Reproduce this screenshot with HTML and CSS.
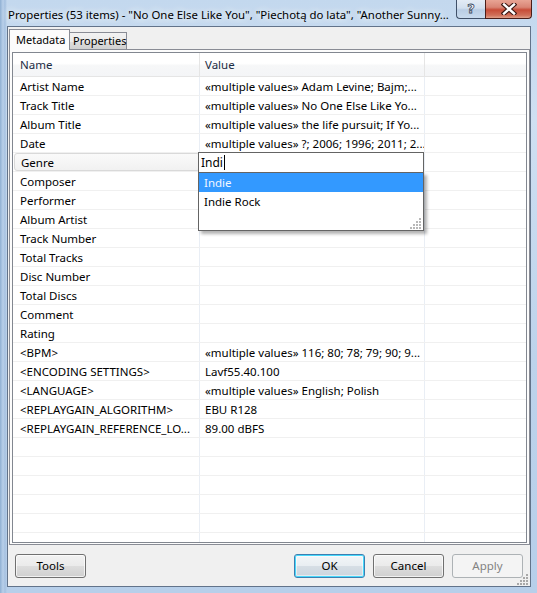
FILE: index.html
```html
<!DOCTYPE html>
<html>
<head>
<meta charset="utf-8">
<link rel="stylesheet" href="styles.css">
</head>
<body>
<div class="titlebar">
  <div class="title">Properties (53 items) - "No One Else Like You", "Piechotą do lata", "Another Sunny...</div>
  <div class="caption">
    <div class="cb help"><span>?</span></div>
    <div class="cb close">
      <svg width="16" height="12" viewBox="0 0 16 12"><path d="M3 1.5 L13 10.5 M13 1.5 L3 10.5" stroke="#3b1712" stroke-width="4.6" stroke-linecap="square" fill="none"/><path d="M3 1.5 L13 10.5 M13 1.5 L3 10.5" stroke="#ffffff" stroke-width="2.4" stroke-linecap="square" fill="none"/></svg>
    </div>
  </div>
</div>
<div class="client">
  <div class="tabs">
    <div class="tab active">Metadata</div>
    <div class="tab">Properties</div>
  </div>
  <div class="panel">
    <div class="list">
      <div class="row header"><div class="c1">Name</div><div class="c2">Value</div><div class="c3"></div></div>
      <div class="row"><div class="c1">Artist Name</div><div class="c2">«multiple values» Adam Levine; Bajm;...</div><div class="c3"></div></div>
      <div class="row"><div class="c1">Track Title</div><div class="c2">«multiple values» No One Else Like Yo...</div><div class="c3"></div></div>
      <div class="row"><div class="c1">Album Title</div><div class="c2">«multiple values» the life pursuit; If Yo...</div><div class="c3"></div></div>
      <div class="row"><div class="c1">Date</div><div class="c2">«multiple values» ?; 2006; 1996; 2011; 2...</div><div class="c3"></div></div>
      <div class="row sel"><div class="c1">Genre</div><div class="c2"></div><div class="c3"></div></div>
      <div class="row"><div class="c1">Composer</div><div class="c2"></div><div class="c3"></div></div>
      <div class="row"><div class="c1">Performer</div><div class="c2"></div><div class="c3"></div></div>
      <div class="row"><div class="c1">Album Artist</div><div class="c2"></div><div class="c3"></div></div>
      <div class="row"><div class="c1">Track Number</div><div class="c2"></div><div class="c3"></div></div>
      <div class="row"><div class="c1">Total Tracks</div><div class="c2"></div><div class="c3"></div></div>
      <div class="row"><div class="c1">Disc Number</div><div class="c2"></div><div class="c3"></div></div>
      <div class="row"><div class="c1">Total Discs</div><div class="c2"></div><div class="c3"></div></div>
      <div class="row"><div class="c1">Comment</div><div class="c2"></div><div class="c3"></div></div>
      <div class="row"><div class="c1">Rating</div><div class="c2"></div><div class="c3"></div></div>
      <div class="row"><div class="c1">&lt;BPM&gt;</div><div class="c2">«multiple values» 116; 80; 78; 79; 90; 9...</div><div class="c3"></div></div>
      <div class="row"><div class="c1">&lt;ENCODING SETTINGS&gt;</div><div class="c2">Lavf55.40.100</div><div class="c3"></div></div>
      <div class="row"><div class="c1">&lt;LANGUAGE&gt;</div><div class="c2">«multiple values» English; Polish</div><div class="c3"></div></div>
      <div class="row"><div class="c1">&lt;REPLAYGAIN_ALGORITHM&gt;</div><div class="c2">EBU R128</div><div class="c3"></div></div>
      <div class="row"><div class="c1">&lt;REPLAYGAIN_REFERENCE_LO...</div><div class="c2">89.00 dBFS</div><div class="c3"></div></div>
      <div class="row"><div class="c1"></div><div class="c2"></div><div class="c3"></div></div>
      <div class="row"><div class="c1"></div><div class="c2"></div><div class="c3"></div></div>
      <div class="row"><div class="c1"></div><div class="c2"></div><div class="c3"></div></div>
      <div class="row"><div class="c1"></div><div class="c2"></div><div class="c3"></div></div>
      <div class="row"><div class="c1"></div><div class="c2"></div><div class="c3"></div></div>
      <div class="row"><div class="c1"></div><div class="c2"></div><div class="c3"></div></div>

      <div class="edit"><span>Indi</span><span class="caret"></span></div>
      <div class="dropdown">
        <div class="opt hl">Indie</div>
        <div class="opt">Indie Rock</div>
        <svg class="grip" width="12" height="12" viewBox="0 0 12 12"><g fill="#b8b8b8"><rect x="9" y="1" width="2" height="2"/><rect x="6" y="4" width="2" height="2"/><rect x="9" y="4" width="2" height="2"/><rect x="3" y="7" width="2" height="2"/><rect x="6" y="7" width="2" height="2"/><rect x="9" y="7" width="2" height="2"/><rect x="0" y="10" width="2" height="2"/><rect x="3" y="10" width="2" height="2"/><rect x="6" y="10" width="2" height="2"/><rect x="9" y="10" width="2" height="2"/></g></svg>
      </div>
    </div>
  </div>
  <div class="buttons">
    <div class="btn">Tools</div>
    <div class="spacer"></div>
    <div class="btn default">OK</div>
    <div class="btn">Cancel</div>
    <div class="btn disabled">Apply</div>
  </div>
  <svg class="sizegrip" width="12" height="12" viewBox="0 0 12 12"><g fill="#a8a8a8"><rect x="9" y="1" width="2" height="2"/><rect x="6" y="4" width="2" height="2"/><rect x="9" y="4" width="2" height="2"/><rect x="3" y="7" width="2" height="2"/><rect x="6" y="7" width="2" height="2"/><rect x="9" y="7" width="2" height="2"/><rect x="0" y="10" width="2" height="2"/><rect x="3" y="10" width="2" height="2"/><rect x="6" y="10" width="2" height="2"/><rect x="9" y="10" width="2" height="2"/></g></svg>
</div>
</body>
</html>
```
FILE: styles.css
```css
* { box-sizing: border-box; }
html, body { margin: 0; padding: 0; }
body {
  width: 537px;
  height: 593px;
  overflow: hidden;
  font-family: "Noto Sans", "Open Sans", sans-serif;
  font-size: 11.5px;
  color: #000;
  background:
    linear-gradient(90deg, #8fb0d3 0px, #b9d0ea 3px, #a6c1e0 5px, rgba(0,0,0,0) 7px),
    linear-gradient(180deg, #c3d8ee 0%, #cfe0f2 20%, #bdd3eb 60%, #b7cfea 100%);
  display: flex;
  flex-direction: column;
}

.titlebar {
  height: 26px;
  position: relative;
  flex: none;
}
.title {
  padding: 7px 0 0 8px;
  font-size: 11.4px;
  line-height: 16px;
  white-space: nowrap;
  width: 450px;
  overflow: hidden;
  text-shadow: 0 0 6px #eef5fc, 0 0 10px #eef5fc;
}
.caption {
  position: absolute;
  top: 0;
  right: 5px;
  display: flex;
}
.cb {
  height: 19px;
  display: flex;
  align-items: center;
  justify-content: center;
  border: 1px solid #3f5068;
  border-top: none;
}
.help {
  width: 29px;
  border-right: none;
  border-radius: 0 0 0 4px;
  background: linear-gradient(180deg, #e3ebf5 0%, #d2dfee 45%, #b9cde4 55%, #c9dbee 100%);
}
.help span {
  font-family: "DejaVu Sans", sans-serif;
  font-weight: bold;
  font-size: 13px;
  color: #fff;
  -webkit-text-stroke: 0.8px #36465c;
  line-height: 1;
  margin-top: -2px;
}
.close {
  width: 47px;
  border-color: #4a1d18;
  border-radius: 0 0 4px 0;
  background: linear-gradient(180deg, #e8a494 0%, #d98575 40%, #c74c38 55%, #d0705a 85%, #e0a08a 100%);
}

.client {
  margin-left: 7px;
  width: 524px;
  height: 561px;
  border: 1px solid #62738a;
  background: #f0f0f0;
  display: flex;
  flex-direction: column;
  position: relative;
  flex: none;
}

.tabs {
  display: flex;
  align-items: flex-start;
  height: 22px;
  padding: 2px 0 0 1px;
  flex: none;
}
.tab {
  height: 18px;
  margin-top: 3px;
  width: 57px;
  border: 1px solid #898c95;
  border-bottom: none;
  border-left: none;
  background: linear-gradient(180deg, #f2f2f2 0%, #ebebeb 50%, #dddddd 51%, #cfcfcf 100%);
  padding-left: 3px;
  line-height: 16px;
  font-size: 11px;
  white-space: nowrap;
}
.tab.active {
  height: 21px;
  margin-top: 0;
  width: 61px;
  border-left: 1px solid #898c95;
  background: #fcfcfc;
  padding-left: 6px;
  line-height: 19px;
  position: relative;
  z-index: 2;
}

.panel {
  margin-left: 1px;
  width: 521px;
  height: 496px;
  border: 1px solid #898c95;
  background: #fcfcfc;
  padding: 2px 2px 1px 2px;
  flex: none;
  display: flex;
}
.list {
  flex: 1;
  border: 1px solid #828790;
  background: #fff;
  overflow: hidden;
  position: relative;
}
.row {
  display: flex;
  height: 19px;
  border-bottom: 1px solid #f0f0f0;
}
.row > div {
  white-space: nowrap;
  overflow: hidden;
  line-height: 19px;
}
.c1 { width: 187px; padding-left: 7px; border-right: 1px solid #e9eef5; }
.c2 { width: 225px; padding-left: 5px; border-right: 1px solid #e9eef5; }
.c3 { flex: 1; }

.row.header {
  height: 24px;
  border-bottom: 1px solid #e5e5e5;
  background: linear-gradient(180deg, #ffffff 0%, #ffffff 45%, #f6f7f8 55%, #f4f5f7 100%);
}
.row.header > div {
  line-height: 23px;
  color: #1c2c44;
  border-right-color: #e5e5e5;
}
.row.sel .c1 {
  border: 1px solid #d9d9d9;
  border-radius: 3px;
  margin-left: 1px;
  width: 186px;
  padding-left: 6px;
  line-height: 17px;
  background: linear-gradient(180deg, #fafafa 0%, #f1f1f1 100%);
}

.edit {
  position: absolute;
  left: 185px;
  top: 99px;
  width: 226px;
  height: 21px;
  border: 1px solid #646464;
  background: #fff;
  padding-left: 2px;
  display: flex;
  align-items: center;
  font-size: 12px;
  z-index: 3;
}
.caret {
  display: inline-block;
  width: 1px;
  height: 15px;
  background: #000;
  margin-left: 1px;
}
.dropdown {
  position: absolute;
  left: 185px;
  top: 119px;
  width: 226px;
  height: 59px;
  border: 1px solid #646464;
  background: #fff;
  box-shadow: 3px 3px 3px rgba(0,0,0,0.3);
  z-index: 3;
}
.opt {
  height: 19px;
  line-height: 19px;
  padding-left: 5px;
}
.opt.hl {
  background: #3399ff;
  color: #f2f7ff;
}
.grip {
  position: absolute;
  right: 1px;
  bottom: 1px;
}

.buttons {
  display: flex;
  gap: 8px;
  margin-top: 9px;
  padding: 0 7px 0 7px;
  flex: none;
}
.spacer { flex: 1; }
.btn {
  width: 71px;
  height: 24px;
  border: 1px solid #707070;
  border-radius: 3px;
  background: linear-gradient(180deg, #f2f2f2 0%, #ebebeb 48%, #dddddd 52%, #cfcfcf 100%);
  box-shadow: inset 0 0 0 1px rgba(255,255,255,0.7);
  text-align: center;
  line-height: 22px;
  font-size: 11.5px;
}
.btn.default {
  border-color: #3c7fb1;
  box-shadow: inset 0 0 0 1px #48d8fb, inset 0 0 0 2px rgba(255,255,255,0.5);
  background: linear-gradient(180deg, #f3f6f8 0%, #e9eef2 48%, #d6dee5 52%, #cbd5de 100%);
}
.btn.disabled {
  border-color: #adb2b5;
  background: #f4f4f4;
  color: #838383;
  box-shadow: none;
}
.sizegrip {
  position: absolute;
  right: 1px;
  bottom: 1px;
}
```
